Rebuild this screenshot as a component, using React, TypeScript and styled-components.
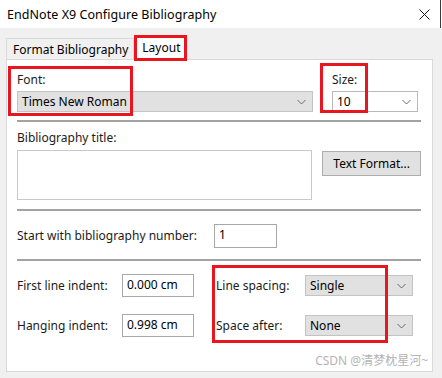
import styled, { createGlobalStyle } from 'styled-components';

const GlobalStyle = createGlobalStyle`
  html, body {
    margin: 0;
    padding: 0;
  }
  body {
    font-family: "Noto Sans", "Open Sans", sans-serif;
    font-size: 12px;
    color: #1b1b1b;
  }
`;

const Window = styled.div`
  width: 442px;
  height: 378px;
  background: #f0f0f0;
  overflow: hidden;
  display: flex;
  flex-direction: column;
`;

const TitleBar = styled.div`
  height: 28px;
  flex-shrink: 0;
  background: #fff;
  display: flex;
  align-items: center;
  justify-content: space-between;
  padding: 0 12px 0 7px;
  box-shadow: inset -1px 0 0 #fff, inset -2px 0 0 #3a3a3a;
`;

const TitleText = styled.span`
  font-size: 12.5px;
  color: #000;
  letter-spacing: 0.05px;
`;

const CloseButton = styled.div`
  display: flex;
  align-items: center;
`;

const TabStrip = styled.div`
  display: flex;
  align-items: flex-end;
  height: 31px;
  padding-left: 6px;
  flex-shrink: 0;
`;

const Tab = styled.div<{ active?: boolean }>`
  position: relative;
  height: ${({ active }) => (active ? 25 : 21)}px;
  box-sizing: border-box;
  display: flex;
  align-items: center;
  padding: ${({ active }) => (active ? '0 6px 2px 6px' : '0 5px 0 6px')};
  background: ${({ active }) => (active ? '#fff' : '#f0f0f0')};
  border: 1px solid #d9d9d9;
  border-bottom: none;
  margin-left: ${({ active }) => (active ? '1px' : '0')};
  margin-bottom: ${({ active }) => (active ? '-1px' : '0')};
  z-index: ${({ active }) => (active ? 1 : 0)};
  color: #000;
`;

const Highlight = styled.div<{ top: number; left: number; right: number; bottom: number }>`
  position: absolute;
  top: ${({ top }) => top}px;
  left: ${({ left }) => left}px;
  right: ${({ right }) => right}px;
  bottom: ${({ bottom }) => bottom}px;
  border: 3px solid #e8161e;
  pointer-events: none;
`;

const Panel = styled.div`
  position: relative;
  margin: 0 9px 0 6px;
  height: 313px;
  box-sizing: border-box;
  background: #fff;
  border: 1px solid #d9d9d9;
  padding: 12px 11px 0 10px;
  display: flex;
  flex-direction: column;
`;

const FontRow = styled.div`
  display: flex;
  gap: 19px;
`;

const Field = styled.div<{ width: number }>`
  position: relative;
  width: ${({ width }) => width}px;
  display: flex;
  flex-direction: column;
  gap: 3px;
`;

const Label = styled.label`
  line-height: 16px;
  white-space: nowrap;
  color: #1b1b1b;
`;

const Select = styled.div<{ light?: boolean; width?: number }>`
  height: 21px;
  width: ${({ width }) => (width ? `${width}px` : 'auto')};
  box-sizing: border-box;
  display: flex;
  align-items: center;
  justify-content: space-between;
  padding: 0 6px 0 4px;
  background: ${({ light }) => (light ? '#fff' : '#e1e1e1')};
  border: 1px solid ${({ light }) => (light ? '#b9b9b9' : '#c3c3c3')};
  color: #000;
`;

const Separator = styled.div<{ top: number }>`
  height: 2px;
  margin-top: ${({ top }) => top}px;
  background: #a3a3a3;
  flex-shrink: 0;
`;

const TitleSection = styled.div`
  margin-top: 8px;
  display: flex;
  flex-direction: column;
  gap: 4px;
`;

const TitleBody = styled.div`
  display: flex;
  gap: 10px;
  align-items: flex-start;
`;

const TextArea = styled.div`
  width: 296px;
  height: 50px;
  box-sizing: border-box;
  border: 1px solid #c9c9c9;
  background: #fff;
`;

const Button = styled.div`
  margin-top: 1px;
  width: 99px;
  height: 25px;
  box-sizing: border-box;
  display: flex;
  align-items: center;
  justify-content: center;
  background: #e1e1e1;
  border: 1px solid #adadad;
  color: #000;
`;

const InlineRow = styled.div<{ top: number }>`
  position: relative;
  display: flex;
  align-items: center;
  margin-top: ${({ top }) => top}px;
`;

const InlineLabel = styled(Label)<{ width: number }>`
  width: ${({ width }) => width}px;
  flex-shrink: 0;
`;

const TextInput = styled.div<{ width: number; height: number }>`
  width: ${({ width }) => width}px;
  height: ${({ height }) => height}px;
  box-sizing: border-box;
  border: 1px solid #a8a8a8;
  padding: 1px 4px 0;
  line-height: 17px;
  color: #000;
  flex-shrink: 0;
`;

const IndentGrid = styled.div`
  position: relative;
  margin-top: 13px;
  display: grid;
  grid-template-columns: 105px 94px 89px 108px;
  row-gap: 17px;
  align-items: center;
`;

const Watermark = styled.div`
  position: absolute;
  right: 4px;
  bottom: 2px;
  font-family: "Noto Sans", "Noto Sans CJK SC", sans-serif;
  font-size: 12px;
  color: #b4b4b4;
`;

const Chevron = () => (
  <svg width="9" height="6" viewBox="0 0 9 6" fill="none">
    <path d="M0.5 1L4.5 5L8.5 1" stroke="#6a6a6a" strokeWidth="1" />
  </svg>
);

export default function App() {
  return (
    <>
      <GlobalStyle />
      <Window>
        <TitleBar>
          <TitleText>EndNote X9 Configure Bibliography</TitleText>
          <CloseButton>
            <svg width="11" height="11" viewBox="0 0 11 11">
              <path d="M0.5 0.5L10.5 10.5M10.5 0.5L0.5 10.5" stroke="#111" strokeWidth="1" />
            </svg>
          </CloseButton>
        </TitleBar>
        <TabStrip>
          <Tab>Format Bibliography</Tab>
          <Tab active>
            Layout
            <Highlight top={-1} left={-2} right={-1} bottom={-1} />
          </Tab>
        </TabStrip>
        <Panel>
          <FontRow>
            <Field width={296}>
              <Label>Font:</Label>
              <Select>
                Times New Roman
                <Chevron />
              </Select>
              <Highlight top={-6} left={-9} right={180} bottom={-4} />
            </Field>
            <Field width={86}>
              <Label>Size:</Label>
              <Select light>
                10
                <Chevron />
              </Select>
              <Highlight top={-9} left={-12} right={50} bottom={-1} />
            </Field>
          </FontRow>

          <Separator top={8} />

          <TitleSection>
            <Label>Bibliography title:</Label>
            <TitleBody>
              <TextArea />
              <Button>Text Format...</Button>
            </TitleBody>
          </TitleSection>

          <Separator top={9} />

          <InlineRow top={13}>
            <InlineLabel width={197}>Start with bibliography number:</InlineLabel>
            <TextInput width={63} height={24}>1</TextInput>
          </InlineRow>

          <Separator top={11} />

          <IndentGrid>
            <Label>First line indent:</Label>
            <TextInput width={72} height={23}>0.000 cm</TextInput>
            <Label>Line spacing:</Label>
            <Select width={108}>
              Single
              <Chevron />
            </Select>
            <Label>Hanging indent:</Label>
            <TextInput width={72} height={23}>0.998 cm</TextInput>
            <Label>Space after:</Label>
            <Select width={108}>
              None
              <Chevron />
            </Select>
            <Highlight top={-9} left={195} right={33} bottom={-6} />
          </IndentGrid>

          <Watermark>CSDN @清梦枕星河~</Watermark>
        </Panel>
      </Window>
    </>
  );
}
